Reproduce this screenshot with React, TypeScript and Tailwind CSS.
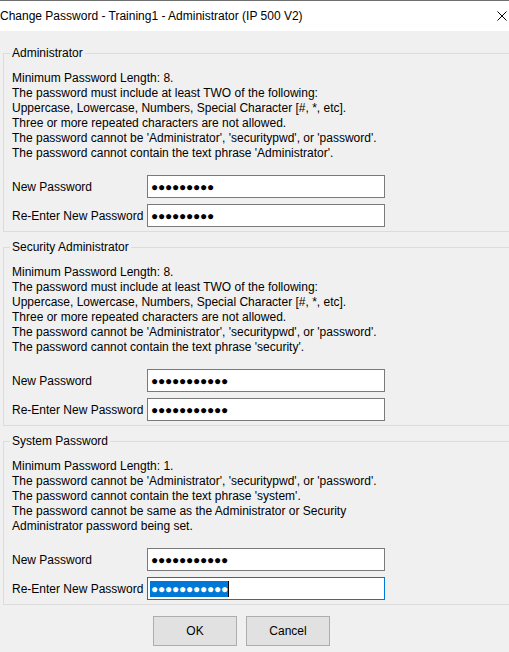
import React from "react";

type Group = {
  title: string;
  lines: string[];
  first: number;
  second: number;
  focused?: boolean;
};

const groups: Group[] = [
  {
    title: "Administrator",
    lines: [
      "Minimum Password Length: 8.",
      "The password must include at least TWO of the following:",
      "Uppercase, Lowercase, Numbers, Special Character [#, *, etc].",
      "Three or more repeated characters are not allowed.",
      "The password cannot be 'Administrator', 'securitypwd', or 'password'.",
      "The password cannot contain the text phrase 'Administrator'.",
    ],
    first: 9,
    second: 9,
  },
  {
    title: "Security Administrator",
    lines: [
      "Minimum Password Length: 8.",
      "The password must include at least TWO of the following:",
      "Uppercase, Lowercase, Numbers, Special Character [#, *, etc].",
      "Three or more repeated characters are not allowed.",
      "The password cannot be 'Administrator', 'securitypwd', or 'password'.",
      "The password cannot contain the text phrase 'security'.",
    ],
    first: 11,
    second: 11,
  },
  {
    title: "System Password",
    lines: [
      "Minimum Password Length: 1.",
      "The password cannot be 'Administrator', 'securitypwd', or 'password'.",
      "The password cannot contain the text phrase 'system'.",
      "The password cannot be same as the Administrator or Security",
      "Administrator password being set.",
    ],
    first: 11,
    second: 11,
    focused: true,
  },
];

function PasswordBox({ count, focused }: { count: number; focused?: boolean }) {
  const dots = "●".repeat(count);
  if (focused) {
    return (
      <div className="w-[238px] h-[23px] border border-[#0078d7] bg-white flex items-center pl-[2px]">
        <span className="bg-[#0078d7] text-white h-[16px] leading-[16px] pl-[1px] tracking-[-0.25px]">{dots}</span>
        <span className="w-[1px] h-[16px] bg-black" />
      </div>
    );
  }
  return (
    <div className="w-[238px] h-[23px] border border-[#7a7a7a] bg-white flex items-center pl-[3px]">
      <span className="text-black tracking-[-0.25px] leading-[16px]">{dots}</span>
    </div>
  );
}

function PasswordGroup({ g, first }: { g: Group; first?: boolean }) {
  return (
    <fieldset
      className={
        "ml-[3px] border-t border-l border-b border-[#dcdcdc] pl-[8px] pb-[4px] " +
        (first ? "mt-[15px]" : "mt-[8px]")
      }
    >
      <legend className="px-[2px] -ml-[2px] leading-[15px]">{g.title}</legend>
      <div className="pt-[10px] leading-[15px]">
        {g.lines.map((l, i) => (
          <div key={i} className="whitespace-nowrap">{l}</div>
        ))}
      </div>
      <div className="mt-[14px] flex flex-col gap-[6px]">
        <div className="flex items-center">
          <div className="w-[135px]">New Password</div>
          <PasswordBox count={g.first} />
        </div>
        <div className="flex items-center">
          <div className="w-[135px]">Re-Enter New Password</div>
          <PasswordBox count={g.second} focused={g.focused} />
        </div>
      </div>
    </fieldset>
  );
}

export default function App() {
  return (
    <div className="w-[509px] h-[652px] overflow-hidden bg-[#f0f0f0] text-[12px] text-black font-['Liberation_Sans',Arial,sans-serif]">
      {/* title bar */}
      <div className="h-[31px] border-t border-[#707070] bg-white flex items-center justify-between">
        <span className="whitespace-nowrap">Change Password - Training1 - Administrator (IP 500 V2)</span>
        <svg width="10" height="10" viewBox="0 0 10 10" className="mr-[2px]">
          <path d="M0.5 0.5 L9.5 9.5 M9.5 0.5 L0.5 9.5" stroke="#000" strokeWidth="1" />
        </svg>
      </div>

      {groups.map((g, i) => (
        <PasswordGroup key={g.title} g={g} first={i === 0} />
      ))}

      {/* buttons */}
      <div className="flex gap-[9px] ml-[153px] mt-[11px]">
        <button className="w-[84px] h-[30px] bg-[#e1e1e1] border border-[#adadad]">OK</button>
        <button className="w-[84px] h-[30px] bg-[#e1e1e1] border border-[#adadad]">Cancel</button>
      </div>
    </div>
  );
}
